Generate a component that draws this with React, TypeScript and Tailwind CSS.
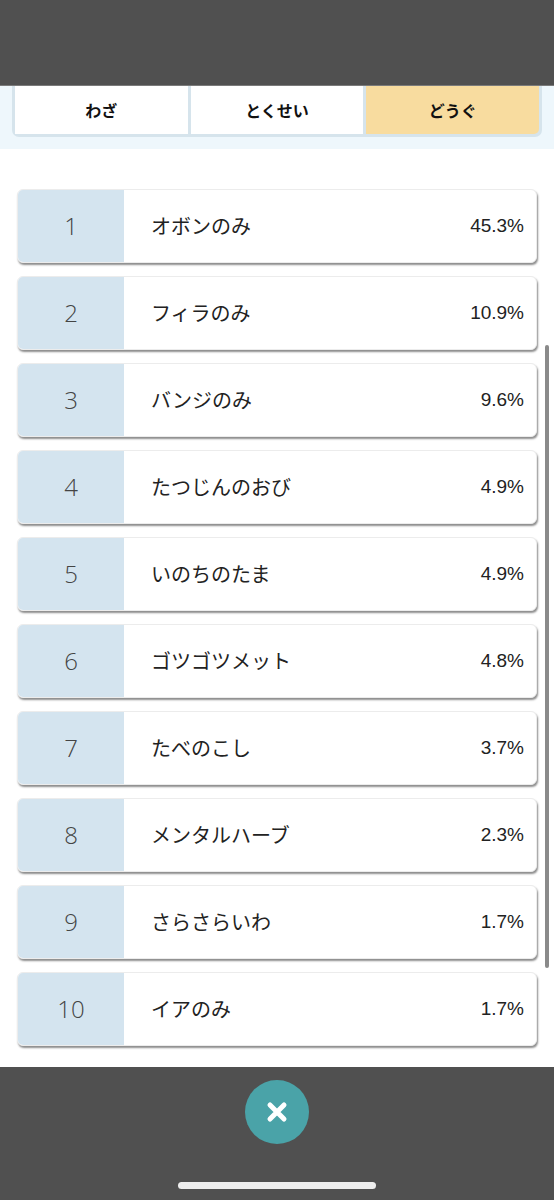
import React from "react";

const items: [string, string][] = [
  ["オボンのみ", "45.3%"],
  ["フィラのみ", "10.9%"],
  ["バンジのみ", "9.6%"],
  ["たつじんのおび", "4.9%"],
  ["いのちのたま", "4.9%"],
  ["ゴツゴツメット", "4.8%"],
  ["たべのこし", "3.7%"],
  ["メンタルハーブ", "2.3%"],
  ["さらさらいわ", "1.7%"],
  ["イアのみ", "1.7%"],
];

export default function App() {
  const font = { fontFamily: '"Noto Sans CJK JP", "Noto Sans", sans-serif' };
  return (
    <div className="relative w-[554px] h-[1200px] overflow-hidden bg-white flex flex-col" style={font}>
      <div className="h-[85px] bg-[#505050] shrink-0" />
      <div className="h-[1px] bg-[#7a7a7a] shrink-0" />
      <div className="h-[63px] bg-[#eef7fc] shrink-0 px-[12px]">
        <div className="grid grid-cols-3 gap-[3px] bg-[#d6e4ec] px-[3px] pb-[3px] rounded-b-[7px]">
          <div className="h-[48px] bg-white flex items-center justify-center text-[16px] font-bold text-[#111]">わざ</div>
          <div className="h-[48px] bg-white flex items-center justify-center text-[16px] font-bold text-[#111]">とくせい</div>
          <div className="h-[48px] bg-[#f8dc9f] rounded-br-[5px] flex items-center justify-center text-[16px] font-bold text-[#111]">どうぐ</div>
        </div>
      </div>
      <div className="flex flex-col gap-[13px] pt-[40px] pb-[21px] pl-[17px] pr-[17px] shrink-0">
        {items.map(([name, pct], i) => (
          <div
            key={i}
            className="h-[74px] flex rounded-[6px] overflow-hidden bg-white border border-[#ececec] shadow-[1px_2px_2px_rgba(0,0,0,0.45)]"
          >
            <div
              className="w-[106px] bg-[#d4e4ef] flex items-center justify-center text-[24px] font-light text-[#444]"
              style={{ fontFamily: '"Open Sans", sans-serif' }}
            >
              {i + 1}
            </div>
            <div className="flex-1 flex items-center justify-between pl-[27px] pr-[12px]">
              <span className="text-[20px] font-normal text-[#222]">{name}</span>
              <span
                className="text-[19px] font-normal text-[#222]"
                style={{ fontFamily: '"Liberation Sans", sans-serif' }}
              >
                {pct}
              </span>
            </div>
          </div>
        ))}
      </div>
      <div className="flex-1 bg-[#505050] flex flex-col items-center">
        <div className="mt-[13px] w-[64px] h-[64px] rounded-full bg-[#4aa3a8] flex items-center justify-center">
          <svg width="22" height="22" viewBox="0 0 22 22">
            <path d="M4 4 L18 18 M18 4 L4 18" stroke="white" strokeWidth="5" strokeLinecap="round" />
          </svg>
        </div>
        <div className="mt-[38px] w-[198px] h-[7px] rounded-full bg-[#eeeeee]" />
      </div>
      <div className="absolute left-[545px] top-[345px] w-[4px] h-[623px] rounded-full bg-[#8a8a8a]" />
    </div>
  );
}
